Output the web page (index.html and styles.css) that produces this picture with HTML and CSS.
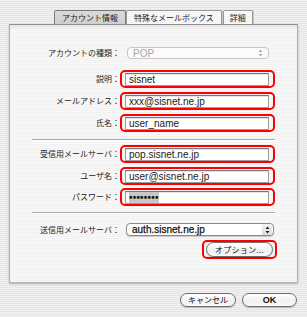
FILE: index.html
```html
<!DOCTYPE html>
<html lang="ja">
<head>
<meta charset="utf-8">
<link rel="stylesheet" href="styles.css">
</head>
<body>
<div class="win">
  <div class="tabs">
    <div class="tab sel">アカウント情報</div>
    <div class="tab">特殊なメールボックス</div>
    <div class="tab t3">詳細</div>
  </div>
  <div class="panel">
    <div class="row r-type">
      <span class="lbl">アカウントの種類：</span>
      <div class="popup dis"><span class="ptext">POP</span>
        <svg class="arr" width="5" height="8" viewBox="0 0 5 8"><path d="M2.5 0.5L4.5 3H0.5Z M2.5 7.5L4.5 5H0.5Z" fill="#aaa"/></svg>
      </div>
    </div>
    <div class="row r1"><span class="lbl">説明：</span><div class="hl"><div class="field">sisnet</div></div></div>
    <div class="row r2"><span class="lbl">メールアドレス：</span><div class="hl"><div class="field">xxx@sisnet.ne.jp</div></div></div>
    <div class="row r2"><span class="lbl">氏名：</span><div class="hl"><div class="field">user_name</div></div></div>
    <div class="sep s1"></div>
    <div class="row r2"><span class="lbl">受信用メールサーバ：</span><div class="hl"><div class="field">pop.sisnet.ne.jp</div></div></div>
    <div class="row r2"><span class="lbl">ユーザ名：</span><div class="hl"><div class="field">user@sisnet.ne.jp</div></div></div>
    <div class="row r3"><span class="lbl">パスワード：</span><div class="hl"><div class="field"><span class="pw">••••••••</span></div></div></div>
    <div class="sep s2"></div>
    <div class="row r-smtp">
      <span class="lbl">送信用メールサーバ：</span>
      <div class="popup act"><span class="ptext">auth.sisnet.ne.jp</span>
        <span class="abox"><svg class="arr" width="5" height="8" viewBox="0 0 5 8"><path d="M2.5 0.5L4.5 3H0.5Z M2.5 7.5L4.5 5H0.5Z" fill="#222"/></svg></span>
      </div>
    </div>
    <div class="row r-opt"><div class="hl hl-btn"><div class="btn opt">オプション...</div></div></div>
  </div>
  <div class="footer">
    <div class="btn cancel">キャンセル</div>
    <div class="btn ok">OK</div>
  </div>
</div>
</body>
</html>
```
FILE: styles.css
```css
* { box-sizing: border-box; margin: 0; padding: 0; }
html, body { width: 307px; height: 317px; overflow: hidden; }
body {
  background: repeating-linear-gradient(to bottom, #f1f1f1 0 1px, #e6e6e6 1px 2px);
  font-family: "Noto Sans CJK JP", sans-serif;
  font-size: 8px;
  color: #222;
}
.win { padding-top: 10px; }
.tabs { display: flex; padding-left: 54px; height: 14px; }
.tab {
  height: 14px;
  padding: 0 7px;
  border: 1px solid #9a9a9a;
  border-bottom: none;
  border-radius: 2px 2px 0 0;
  background: repeating-linear-gradient(to bottom, #fbfbfb 0 1px, #f1f1f1 1px 2px);
  line-height: 13px;
  white-space: nowrap;
  box-shadow: 1px 0 0 #c4c4c4;
  color: #222;
}
.tab.sel {
  background: linear-gradient(#d9d9d9, #cfcfcf);
  border-color: #7a7a7a;
}
.tab.t3 { margin-left: 1px; padding: 0 6px; }
.panel {
  margin-left: 9px;
  width: 289px;
  height: 259px;
  border: 1px solid #b2b2b2;
  border-top-color: #8e8e8e;
  background: repeating-linear-gradient(to bottom, #f9f9f9 0 1px, #f1f1f1 1px 2px);
  box-shadow: 0 1px 2px rgba(0,0,0,0.25), inset 0 4px 4px -2px rgba(0,0,0,0.09);
}
.row { display: flex; align-items: center; }
.lbl { width: 110px; flex: none; text-align: right; white-space: nowrap; line-height: 12px; color: #222; }
.r-type { margin-top: 22px; height: 12px; }
.r1 { margin-top: 11px; }
.r2 { margin-top: 4px; }
.r3 { margin-top: 3px; }
.hl {
  width: 155px;
  height: 18px;
  border: 2px solid #f00;
  border-radius: 5px;
  padding: 1px 4px 0 3px;
}
.field {
  height: 13px;
  background: #fff;
  border: 1px solid #9b9b9b;
  border-top-color: #777;
  box-shadow: inset 0 1px 1px rgba(0,0,0,0.12);
  font-family: "Liberation Sans", Arial, sans-serif;
  font-size: 10px;
  line-height: 11px;
  padding-left: 3px;
  color: #1a1a1a;
}
.pw { background: #c8c8c8; font-weight: bold; letter-spacing: 0.2px; }
.sep {
  margin: 0 22px;
  height: 2px;
  border-top: 1px solid #a9a9a9;
  border-bottom: 1px solid #ffffff;
}
.s1 { margin-top: 7px; }
.s2 { margin-top: 6px; }
.popup {
  display: flex;
  align-items: center;
  height: 12px;
  border-radius: 4px;
  background: #fff;
  font-family: "Liberation Sans", Arial, sans-serif;
  font-size: 10px;
}
.popup .ptext { flex: 1; padding-left: 5px; line-height: 11px; }
.popup.dis {
  margin-left: 7px;
  width: 142px;
  border: 1px solid #c6c6c6;
  color: #a6a6a6;
  background: #fbfbfb;
}
.popup.dis .arr { margin-right: 5px; }
.r-smtp { margin-top: 9px; height: 13px; }
.popup.act {
  margin-left: 6px;
  width: 148px;
  height: 13px;
  border: 1px solid #8a8a8a;
  box-shadow: 0 1px 1px rgba(0,0,0,0.18);
  color: #111;
  font-weight: bold;
}
.popup.act .ptext { font-weight: normal; -webkit-text-stroke: 0.25px #111; }
.abox {
  display: flex;
  align-items: center;
  justify-content: center;
  width: 10px;
  height: 11px;
  margin-right: 1px;
  border-radius: 0 3px 3px 0;
  background: linear-gradient(#f4f4f4, #dcdcdc);
}
.r-opt { margin-top: 4px; justify-content: flex-end; padding-right: 20px; }
.hl-btn { width: 75px; height: 19px; padding: 0 2px 0 2px; display: flex; align-items: center; }
.btn {
  height: 15px;
  border: 1px solid #6e6e6e;
  border-radius: 8px;
  background: linear-gradient(#ffffff, #f0f0f0 60%, #fafafa);
  box-shadow: 0 1px 1px rgba(0,0,0,0.2);
  text-align: center;
  line-height: 13px;
  white-space: nowrap;
  color: #111;
}
.opt { width: 68px; letter-spacing: 0.3px; }
.footer {
  display: flex;
  justify-content: flex-end;
  gap: 6px;
  padding-right: 10px;
  margin-top: 10px;
}
.cancel { width: 56px; height: 14px; line-height: 12px; }
.ok {
  width: 55px; height: 14px; line-height: 12px;
  font-family: "Liberation Sans", Arial, sans-serif;
  font-weight: bold;
  font-size: 9px;
}
```
